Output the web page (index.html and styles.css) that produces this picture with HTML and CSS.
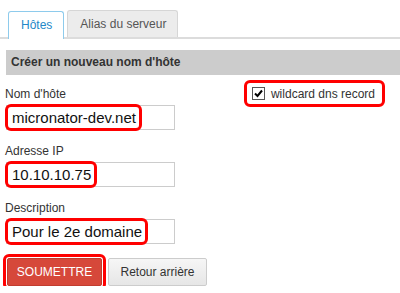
FILE: index.html
```html
<!DOCTYPE html>
<html lang="fr">
    <head>
        <meta charset="UTF-8">
        <title>Hôtes</title>
        <link rel="stylesheet" href="styles.css">
    </head>
    <body>
        <div class="tabs">
            <div class="tab active">Hôtes</div>
            <div class="tab">Alias du serveur</div>
        </div>
        <div class="section-title">Créer un nouveau nom d'hôte</div>
        <form class="form">
            <div class="row">
                <div class="field">
                    <div class="label">Nom d'hôte</div>
                    <div class="input"><span class="mark value">micronator-dev.net</span></div>
                </div>
                <label class="mark check">
                    <span class="box">
                        <svg width="11" height="11" viewBox="0 0 11 11"><path d="M2 5.5 L4.5 8 L9 2.5" fill="none" stroke="#000" stroke-width="2"/></svg>
                    </span>
                    wildcard dns record
                </label>
            </div>
            <div class="field">
                <div class="label">Adresse IP</div>
                <div class="input"><span class="mark value">10.10.10.75</span></div>
            </div>
            <div class="field">
                <div class="label">Description</div>
                <div class="input"><span class="mark value">Pour le 2e domaine</span></div>
            </div>
            <div class="actions">
                <span class="mark btn-mark"><button type="button" class="btn primary">SOUMETTRE</button></span>
                <button type="button" class="btn">Retour arrière</button>
            </div>
        </form>
    </body>
</html>
```

FILE: styles.css
```css
body {
    margin: 0;
    font-family: "Liberation Sans", Arial, sans-serif;
    font-size: 12px;
    color: #333;
    background: #fff;
}
.tabs {
    display: flex;
    align-items: flex-end;
    gap: 3px;
    height: 27px;
    padding: 10px 0 0 8px;
    border-bottom: 2px solid #dcdcdc;
}
.tab {
    display: flex;
    align-items: center;
    box-sizing: border-box;
    height: 27px;
    padding: 0 11px 0 12px;
    background: #ececec;
    border: 1px solid #d6d6d6;
    border-bottom: none;
    border-radius: 3px 3px 0 0;
    color: #555;
}
.tab.active {
    height: 28px;
    margin-bottom: -2px;
    padding-bottom: 2px;
    background: #fff;
    border-color: #8ecbec;
    color: #2488c8;
}
.section-title {
    margin: 11px 0 0 6px;
    height: 25px;
    line-height: 25px;
    padding-left: 5px;
    background: #cccccc;
    font-weight: bold;
}
.form {
    margin: 0;
    padding: 12px 15px 0 5px;
}
.row {
    display: flex;
    justify-content: space-between;
    align-items: flex-start;
}
.field {
    margin-bottom: 14px;
}
.label {
    line-height: 14px;
    margin-bottom: 4px;
}
.input {
    display: flex;
    box-sizing: border-box;
    width: 169px;
    height: 25px;
    margin-left: 1px;
    border: 1px solid #ccc;
    background: #fff;
}
.mark {
    border: 3px solid #f00;
    border-radius: 6px;
    background: #fff;
}
.value {
    display: flex;
    align-items: center;
    margin: -2px 0 -2px -2px;
    padding: 0 3px 0 4px;
    font-size: 15px;
    color: #111;
}
.check {
    display: flex;
    align-items: center;
    gap: 6px;
    box-sizing: border-box;
    height: 27px;
    margin-top: -7px;
    padding: 0 7px 0 5px;
}
.box {
    display: flex;
    align-items: center;
    justify-content: center;
    box-sizing: border-box;
    width: 13px;
    height: 13px;
    border: 1px solid #555;
    background: #fff;
}
.actions {
    display: flex;
    align-items: flex-start;
}
.btn-mark {
    display: flex;
    margin: -4px 0 -4px -2px;
    padding: 1px;
}
.btn {
    box-sizing: border-box;
    height: 28px;
    width: 99px;
    margin-left: 2px;
    padding: 0;
    font-family: inherit;
    font-size: 12px;
    color: #333;
    background: linear-gradient(#f6f6f6, #e6e6e6);
    border: 1px solid #ccc;
    border-radius: 2px;
}
.btn.primary {
    width: 95px;
    margin: 0;
    color: #fff;
    background: #d6483a;
    border-color: #c23c2f;
}
```
